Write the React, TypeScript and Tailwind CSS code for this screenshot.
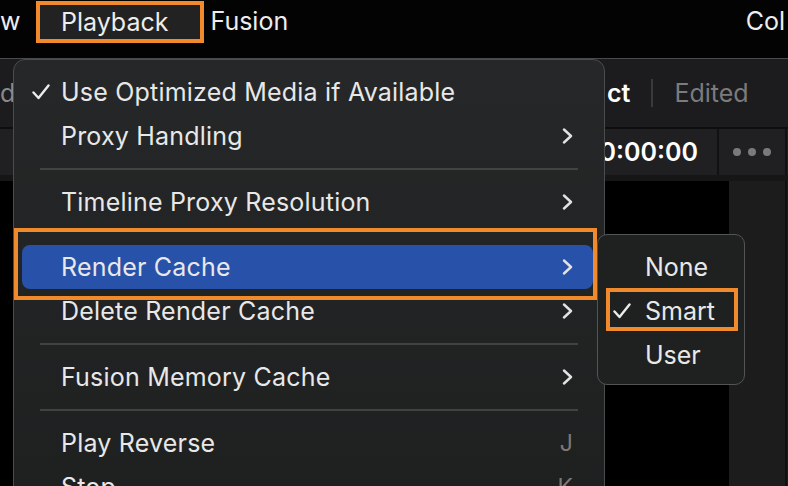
import { ReactNode } from 'react'

const font = { fontFamily: 'Inter, "Noto Sans", sans-serif' }

function Check({ className = '' }: { className?: string }) {
    return (
        <svg width="18" height="16" viewBox="0 0 18 16" className={className} fill="none">
            <path d="M1.5 8.5 L6.5 14 L16.5 1.5" stroke="#ececec" strokeWidth="2.4" strokeLinecap="round" strokeLinejoin="round" />
        </svg>
    )
}

function Chevron() {
    return (
        <svg width="11" height="16" viewBox="0 0 11 16" fill="none">
            <path d="M2 1.5 L9 8 L2 14.5" stroke="#e2e2e2" strokeWidth="2.4" strokeLinecap="round" strokeLinejoin="round" />
        </svg>
    )
}

interface ItemProps {
    label: string
    checked?: boolean
    submenu?: boolean
    shortcut?: string
    active?: boolean
}

function Item({ label, checked, submenu, shortcut, active }: ItemProps) {
    return (
        <div
            className={`relative ml-[8px] mr-[11px] h-[44px] flex items-center pl-[39px] pr-[20px] rounded-[8px] ${
                active ? 'bg-[#2852a9]' : ''
            }`}
        >
            {checked && <Check className="absolute left-[10px] top-[14px]" />}
            <span className="flex-1 text-[25px] text-[#e8e8e8] leading-none tracking-[0.2px]">{label}</span>
            {submenu && <Chevron />}
            {shortcut && <span className="text-[23px] text-[#7a7a7a] leading-none">{shortcut}</span>}
        </div>
    )
}

function Separator() {
    return (
        <div className="h-[22px] flex items-center mx-[26px]">
            <div className="h-[2px] w-full bg-[#414243]" />
        </div>
    )
}

function Boxed({ children, className = '' }: { children?: ReactNode; className?: string }) {
    return <div className={`absolute border-[4px] border-[#f08a2c] ${className}`}>{children}</div>
}

export default function App() {
    return (
        <div className="relative w-[788px] h-[486px] overflow-hidden bg-black select-none" style={font}>
            {/* Menu bar */}
            <div className="h-[58px] bg-[#030304] flex items-start pt-[1px] text-[25px] text-[#ededed] leading-none">
                <span className="mt-[8px] w-[36px]">w</span>
                <div className="h-[42px] border-[4px] border-[#f08a2c] bg-[#222223] flex items-center pl-[21px] pr-[32px]">
                    Playback
                </div>
                <span className="mt-[8px] ml-[6px]">Fusion</span>
                <span className="mt-[8px] ml-auto pr-[3px]">Col</span>
            </div>
            <div className="h-[1px] bg-[#4a4a4c]" />

            {/* Page behind the menus */}
            <div className="h-[68px] bg-[#1c1c1e] flex items-center text-[25px] leading-none">
                <span className="w-[607px] text-[#8a8a8c]">d</span>
                <span className="font-semibold text-white">ct</span>
                <div className="w-[2px] h-[28px] bg-[#3a3a3c] ml-[21px]" />
                <span className="ml-[21px] text-[#7b7b7d]">Edited</span>
            </div>
            <div className="h-[2px] bg-[#0e0e0f]" />
            <div className="h-[46px] bg-[#202022] flex text-[25px] leading-none">
                <div className="w-[717px] flex items-center justify-end pr-[19px] font-semibold text-white">00:00:00:00</div>
                <div className="w-[2px] bg-[#111112]" />
                <div className="w-[66px] flex items-center justify-center gap-[7px]">
                    <span className="w-[8px] h-[8px] rounded-full bg-[#7a7a7c]" />
                    <span className="w-[8px] h-[8px] rounded-full bg-[#7a7a7c]" />
                    <span className="w-[8px] h-[8px] rounded-full bg-[#7a7a7c]" />
                </div>
                <div className="w-[2px] bg-[#111112]" />
                <div className="flex-1" />
            </div>
            <div className="h-[6px] bg-[#161617]" />
            <div className="flex h-[305px]">
                <div className="w-[607px] bg-black" />
                <div className="w-[122px] bg-black" />
                <div className="w-[56px] bg-[#1c1c1d]" />
                <div className="w-[2px] bg-[#101011]" />
                <div className="flex-1 bg-[#1c1c1d]" />
            </div>

            {/* Playback menu */}
            <div className="absolute left-[13px] top-[59px] w-[592px] h-[470px] rounded-[12px] border border-[#4b4c4d] bg-gradient-to-b from-[#262728] to-[#1e1f1f] pt-[10px]">
                <Item label="Use Optimized Media if Available" checked />
                <Item label="Proxy Handling" submenu />
                <Separator />
                <Item label="Timeline Proxy Resolution" submenu />
                <div className="h-[21px]" />
                <Item label="Render Cache" submenu active />
                <Item label="Delete Render Cache" submenu />
                <Separator />
                <Item label="Fusion Memory Cache" submenu />
                <Separator />
                <Item label="Play Reverse" shortcut="J" />
                <Item label="Stop" shortcut="K" />
            </div>

            {/* Render Cache submenu */}
            <div className="absolute left-[597px] top-[234px] w-[148px] h-[151px] rounded-[10px] border border-[#535455] bg-[#1f2020] pt-[10px]">
                {['None', 'Smart', 'User'].map((opt) => (
                    <div key={opt} className="relative h-[44px] flex items-center pl-[47px] text-[25px] text-[#e8e8e8] leading-none">
                        {opt === 'Smart' && <Check className="absolute left-[15px] top-[14px]" />}
                        {opt}
                    </div>
                ))}
            </div>

            {/* Annotation boxes */}
            <Boxed className="left-[14px] top-[228px] w-[583px] h-[72px]" />
            <Boxed className="left-[606px] top-[288px] w-[132px] h-[43px]" />
        </div>
    )
}
